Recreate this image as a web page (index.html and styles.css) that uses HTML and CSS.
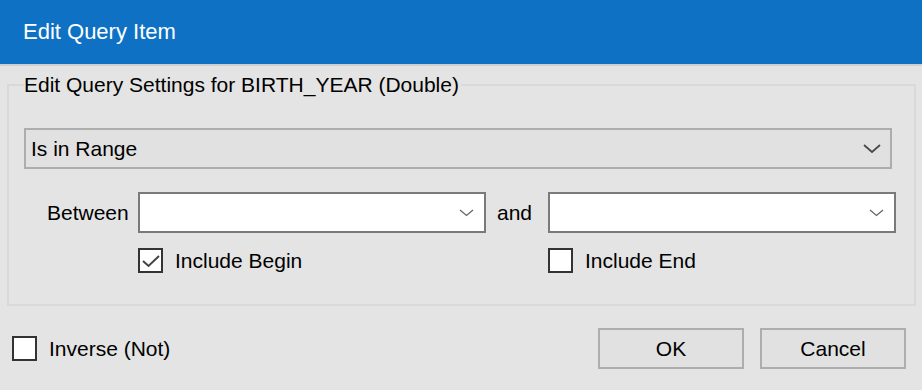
FILE: index.html
```html
<!DOCTYPE html>
<html lang="en">
<head>
    <meta charset="UTF-8">
    <meta name="viewport" content="width=device-width, initial-scale=1.0">
    <title>Edit Query Item</title>
    <link rel="stylesheet" href="styles.css">
</head>
<body>
    <div class="titlebar">Edit Query Item</div>
    <div class="title-edge"></div>
    <div class="content">
        <fieldset class="group">
            <legend>Edit Query Settings for BIRTH_YEAR (Double)</legend>
            <div class="select">
                <span>Is in Range</span>
                <svg class="chevron" width="18" height="10" viewBox="0 0 18 10">
                    <polyline points="1,1 9,8 17,1" fill="none" stroke="#4a4a4a" stroke-width="1.8"/>
                </svg>
            </div>
            <div class="range">
                <div class="label">Between</div>
                <div class="combo">
                    <svg class="chevron-sm" width="15" height="8" viewBox="0 0 15 8">
                        <polyline points="1,1 7.5,6.5 14,1" fill="none" stroke="#666" stroke-width="1.3"/>
                    </svg>
                </div>
                <div class="label and">and</div>
                <div class="combo">
                    <svg class="chevron-sm" width="15" height="8" viewBox="0 0 15 8">
                        <polyline points="1,1 7.5,6.5 14,1" fill="none" stroke="#666" stroke-width="1.3"/>
                    </svg>
                </div>
                <div></div>
                <label class="check">
                    <span class="box">
                        <svg width="21" height="21" viewBox="0 0 21 21">
                            <polyline points="3,11 8.5,16 19,6" fill="none" stroke="#444" stroke-width="2"/>
                        </svg>
                    </span>
                    Include Begin
                </label>
                <div></div>
                <label class="check">
                    <span class="box"></span>
                    Include End
                </label>
            </div>
        </fieldset>
        <div class="footer">
            <label class="check inverse">
                <span class="box"></span>
                Inverse (Not)
            </label>
            <div class="buttons">
                <div class="button">OK</div>
                <div class="button">Cancel</div>
            </div>
        </div>
    </div>
</body>
</html>
```

FILE: styles.css
```css
body {
    margin: 0;
    background: #e4e4e4;
    font-family: "Liberation Sans", Arial, sans-serif;
    font-size: 21px;
    color: #000;
}
.titlebar {
    height: 64px;
    background: #0e71c4;
    color: #fff;
    font-size: 22px;
    padding-left: 23px;
    display: flex;
    align-items: center;
}
.title-edge {
    height: 2px;
    background: #cfcfcf;
}
.content {
    padding-top: 7px;
}
.group {
    margin: 0 8px 0 7px;
    padding: 0 18px 31px 15px;
    border: 2px solid #d9d9d9;
}
.group legend {
    padding: 0 2px 0 0;
    line-height: 24px;
}
.select {
    margin-top: 31px;
    width: 864px;
    height: 37px;
    border: 2px solid #adadad;
    background: #e1e1e1;
    display: flex;
    align-items: center;
    justify-content: space-between;
    padding: 0 9px 0 5px;
    box-sizing: content-box;
}
.select {
    width: 850px;
}
.range {
    margin-top: 23px;
    display: grid;
    grid-template-columns: 91px 348px 62px 348px;
    grid-template-rows: 41px 25px;
    row-gap: 15px;
    padding-left: 23px;
}
.label {
    display: flex;
    align-items: center;
}
.label.and {
    padding-left: 11px;
}
.combo {
    border: 2px solid #7a7a7a;
    background: #fff;
    display: flex;
    align-items: center;
    justify-content: flex-end;
    padding-right: 10px;
}
.check {
    display: flex;
    align-items: center;
    gap: 12px;
}
.box {
    width: 21px;
    height: 21px;
    border: 2px solid #333;
    background: #fff;
    display: block;
}
.box svg {
    display: block;
}
.footer {
    margin-top: 22px;
    display: flex;
    align-items: center;
    justify-content: space-between;
    padding: 0 16px 0 12px;
}
.buttons {
    display: flex;
    gap: 16px;
}
.button {
    width: 142px;
    height: 37px;
    border: 2px solid #adadad;
    background: #e1e1e1;
    display: flex;
    align-items: center;
    justify-content: center;
}
```
